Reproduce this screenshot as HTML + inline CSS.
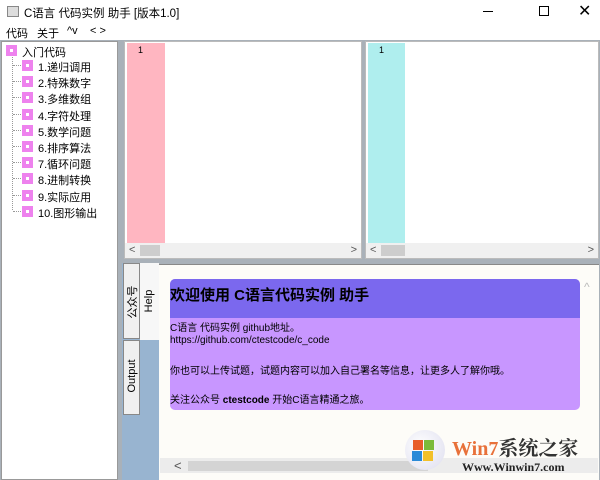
<!DOCTYPE html><html><head><meta charset="utf-8"><style>
*{margin:0;padding:0;box-sizing:border-box}
body{width:600px;height:480px;overflow:hidden;background:#f0f0f0;font-family:"Liberation Sans","Noto Sans CJK SC",sans-serif;font-size:11px;color:#000;position:relative}
.a{position:absolute}
.rot{position:absolute;transform:rotate(-90deg);transform-origin:center;white-space:nowrap;font-size:11px}
.ico{position:absolute;width:11px;height:11px;background:#ee82ee}
.ico:after{content:"";position:absolute;left:4px;top:4px;width:3px;height:3px;background:#fff}
.sb{position:absolute;height:15px;background:#f0f0f0;font-size:11px;color:#555}
</style></head><body>
<div class="a" style="left:0;top:0;width:600px;height:24px;background:#fff"></div>
<div class="a" style="left:7px;top:6px;width:12px;height:11px;border:1px solid #888;background:#ddd"></div>
<div class="a" style="left:24px;top:5px;font-size:11.5px">C语言 代码实例 助手 [版本1.0]</div>
<div class="a" style="left:483px;top:11px;width:10px;height:1px;background:#000"></div>
<div class="a" style="left:539px;top:6px;width:10px;height:10px;border:1px solid #000"></div>
<div class="a" style="left:578px;top:1px;font-size:16px">✕</div>
<div class="a" style="left:0;top:24px;width:600px;height:16px;background:#fff"></div>
<div class="a" style="left:6px;top:25px">代码</div><div class="a" style="left:37px;top:25px">关于</div>
<div class="a" style="left:67px;top:25px">^v</div><div class="a" style="left:90px;top:25px">&lt; &gt;</div>
<div class="a" style="left:0;top:40px;width:600px;height:440px;background:#a9b1b9"></div>
<div class="a" style="left:1px;top:41px;width:117px;height:439px;background:#fff;border:1px solid #999"></div>
<div class="ico" style="left:6px;top:45px"></div><div class="a" style="left:22px;top:44px">入门代码</div>
<div class="a" style="left:12px;top:57px;width:1px;height:153px;border-left:1px dotted #999"></div>
<div id="tree"></div>
<div class="a" style="left:124px;top:41px;width:238px;height:218px;background:#fff;border:1px solid #bbb"></div>
<div class="a" style="left:127px;top:43px;width:38px;height:200px;background:#ffb6c1"></div>
<div class="a" style="left:138px;top:45px;font-size:9px">1</div>
<div class="sb" style="left:125px;top:243px;width:236px"><span class="a" style="left:4px;top:1px">&lt;</span><span class="a" style="left:15px;top:2px;width:20px;height:11px;background:#cdcdcd"></span><span class="a" style="right:4px;top:1px">&gt;</span></div>
<div class="a" style="left:365px;top:41px;width:234px;height:218px;background:#fff;border:1px solid #bbb"></div>
<div class="a" style="left:368px;top:43px;width:37px;height:200px;background:#afeeee"></div>
<div class="a" style="left:379px;top:45px;font-size:9px">1</div>
<div class="sb" style="left:366px;top:243px;width:232px"><span class="a" style="left:4px;top:1px">&lt;</span><span class="a" style="left:15px;top:2px;width:24px;height:11px;background:#cdcdcd"></span><span class="a" style="right:4px;top:1px">&gt;</span></div>
<div class="a" style="left:122px;top:263px;width:37px;height:217px;background:#98b4d0"></div>
<div class="a" style="left:123px;top:263px;width:17px;height:76px;background:#f0f0f0;border:1px solid #888"></div>
<div class="rot" style="left:107px;top:294px;width:50px;text-align:center">公众号</div>
<div class="a" style="left:123px;top:340px;width:17px;height:75px;background:#f0f0f0;border:1px solid #888"></div>
<div class="rot" style="left:107px;top:370px;width:50px;text-align:center">Output</div>
<div class="a" style="left:140px;top:263px;width:19px;height:77px;background:#f7f7f7"></div>
<div class="rot" style="left:124px;top:295px;width:50px;text-align:center">Help</div>
<div class="a" style="left:159px;top:264px;width:440px;height:216px;background:#fdfcf8;border-top:1px solid #888"></div>
<div class="a" style="left:170px;top:279px;width:410px;height:131px;background:#c896ff;border-radius:5px;overflow:hidden;font-size:10px">
<div style="height:39px;background:#7b68ee;padding:5px 0 0 0;font-size:15px;font-weight:bold">欢迎使用 C语言代码实例 助手</div>
<div class="a" style="left:0;top:40px">C语言 代码实例 github地址。</div>
<div class="a" style="left:0;top:56px">https://github.com/ctestcode/c_code</div>
<div class="a" style="left:0;top:83px">你也可以上传试题，试题内容可以加入自己署名等信息，让更多人了解你哦。</div>
<div class="a" style="left:0;top:112px">关注公众号 <b>ctestcode</b> 开始C语言精通之旅。</div></div>
<div class="a" style="left:584px;top:280px;color:#bbb;font-size:12px">^</div>
<div class="sb" style="left:160px;top:458px;width:438px;background:#ececec"><span class="a" style="left:14px;top:0;font-size:13px">&lt;</span><span class="a" style="left:28px;top:3px;width:240px;height:10px;background:#d4d4d4"></span></div>
<div class="a" style="left:405px;top:430px;width:40px;height:40px;border-radius:50%;background:radial-gradient(circle at 40% 40%,#fff,#dde);"></div>
<div class="a" style="left:413px;top:440px;width:10px;height:10px;background:#e85d2a"></div><div class="a" style="left:424px;top:440px;width:10px;height:10px;background:#7cbb3a"></div>
<div class="a" style="left:412px;top:451px;width:10px;height:10px;background:#2a8ad8"></div><div class="a" style="left:423px;top:451px;width:10px;height:10px;background:#f2c02a"></div>
<div class="a" style="left:452px;top:432px;font-size:20px;font-weight:bold;font-family:'Liberation Serif','Noto Serif CJK SC',serif;color:#e8713a">Win<span style="color:#e8713a">7</span><span style="color:#333">系统之家</span></div>
<div class="a" style="left:462px;top:460px;font-size:12px;font-weight:bold;font-family:'Liberation Serif',serif;color:#222">Www.Winwin7.com</div>
<script>
var n=["1.递归调用","2.特殊数字","3.多维数组","4.字符处理","5.数学问题","6.排序算法","7.循环问题","8.进制转换","9.实际应用","10.图形输出"],h="";
n.forEach(function(t,i){var y=60+i*16.2;h+='<div class="a" style="left:13px;top:'+(y+5)+'px;width:10px;border-top:1px dotted #999"></div><div class="ico" style="left:22px;top:'+y+'px"></div><div class="a" style="left:38px;top:'+(y-1)+'px">'+t+'</div>';});
document.getElementById("tree").outerHTML=h;
</script>
</body></html>
